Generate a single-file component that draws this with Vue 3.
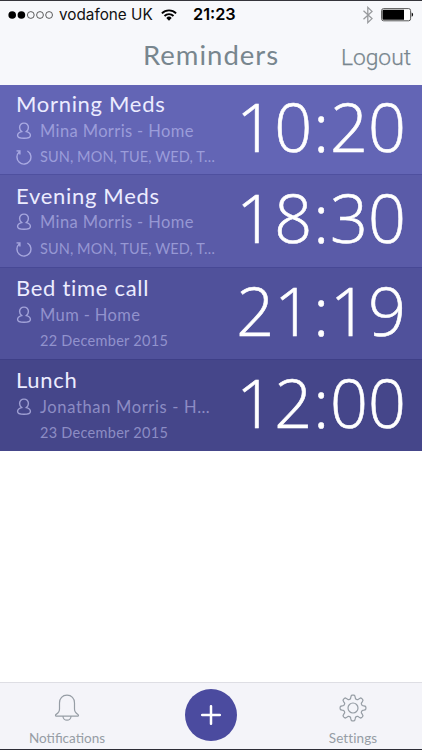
<script setup>
const reminders = [
  { title: 'Morning Meds', contact: 'Mina Morris - Home', when: 'SUN, MON, TUE, WED, T…', repeat: true, time: '10:20', tone: 'a' },
  { title: 'Evening Meds', contact: 'Mina Morris - Home', when: 'SUN, MON, TUE, WED, T…', repeat: true, time: '18:30', tone: 'b' },
  { title: 'Bed time call', contact: 'Mum - Home', when: '22 December 2015', repeat: false, time: '21:19', tone: 'c' },
  { title: 'Lunch', contact: 'Jonathan Morris - H…', when: '23 December 2015', repeat: false, time: '12:00', tone: 'd' },
]

// Outline of an eight-toothed cog, centred on the origin
const cog = (() => {
  const points = []
  const n = 96
  for (let i = 0; i < n; i++) {
    const t = (i / n) * Math.PI * 2
    const c = Math.cos(8 * t)
    const r = 11.1 + 1.8 * Math.tanh(2.2 * c) / Math.tanh(2.2)
    points.push(`${(r * Math.sin(t)).toFixed(2)} ${(-r * Math.cos(t)).toFixed(2)}`)
  }
  return `M${points.join('L')}Z`
})()
</script>

<template>
  <div class="screen">
    <header>
      <div class="status">
        <svg class="signal" width="46" height="10" viewBox="0 0 46 10">
          <circle cx="4.2" cy="5" r="3.8" fill="#000" />
          <circle cx="13.4" cy="5" r="3.8" fill="#000" />
          <g fill="none" stroke="#333" stroke-width=".8">
            <circle cx="22.8" cy="5" r="3.4" />
            <circle cx="32" cy="5" r="3.4" />
            <circle cx="41.1" cy="5" r="3.4" />
          </g>
        </svg>
        <span class="carrier">vodafone UK</span>
        <svg class="wifi" width="16" height="12" viewBox="0 0 16 12">
          <g fill="none" stroke="#000" stroke-width="1.9">
            <path d="M.9 4.3a10 10 0 0 1 14.2 0" />
            <path d="M3.5 7a6.4 6.4 0 0 1 9 0" />
          </g>
          <path d="M5.3 8.9a3.8 3.8 0 0 1 5.4 0L8 11.7Z" fill="#000" />
        </svg>
        <span class="clock">21:23</span>
        <svg class="bluetooth" width="12" height="18" viewBox="0 0 12 18">
          <path d="M1.5 4.8 10 12.6 5.8 16.6V1.4L10 5.4 1.5 13.2" fill="none" stroke="#999b9e" stroke-width="1.3" />
        </svg>
        <svg class="battery" width="33" height="14" viewBox="0 0 33 14">
          <rect x=".6" y=".6" width="29" height="12.2" rx="2" fill="#fff" stroke="#444" stroke-width=".9" />
          <path d="M2.5 1.7H23V11.7H2.5a1 1 0 0 1-1-1V2.7a1 1 0 0 1 1-1Z" fill="#000" />
          <path d="M30.7 4.6a2.3 2.3 0 0 1 0 4.2Z" fill="#000" />
        </svg>
      </div>
      <div class="nav">
        <h1>Reminders</h1>
        <span class="logout">Logout</span>
      </div>
    </header>

    <main>
      <article v-for="item in reminders" :key="item.title" :class="['row', 'tone-' + item.tone]">
        <div class="details">
          <h2>{{ item.title }}</h2>
          <div class="contact">
            <svg class="person" width="16" height="18" viewBox="0 0 16 18">
              <path d="M5.6 9.6C4.4 8.6 3.6 7.2 3.6 5.5A4.3 4.3 0 0 1 8 1.1a4.3 4.3 0 0 1 4.4 4.4c0 1.7-.8 3.1-2 4.1 2.5.6 4 1.9 4 3.9 0 2.2-2.3 2.8-6.4 2.8s-6.4-.6-6.4-2.8c0-2 1.5-3.3 4-3.9Z" />
            </svg>
            <span>{{ item.contact }}</span>
          </div>
          <div :class="['when', { days: item.repeat }]">
            <svg v-if="item.repeat" class="repeat" width="16" height="16" viewBox="0 0 16 16">
              <path d="M11.4 2A7 7 0 1 1 3.2 2.9M.5 1.9 3.9 2V5.6" />
            </svg>
            <span>{{ item.when }}</span>
          </div>
        </div>
        <time>{{ item.time.split(':')[0] }}<span class="colon">:</span>{{ item.time.split(':')[1] }}</time>
      </article>
    </main>

    <footer>
      <div class="tab">
        <svg width="26" height="28" viewBox="0 0 26 28">
          <path d="M13 1.2c-4.6 0-7.5 3.2-7.5 7.7v6.2c0 2.5-1.2 4.1-3.4 5.3-.9.5-.8 1.7.2 1.7h21.4c1 0 1.1-1.2.2-1.7-2.2-1.2-3.4-2.8-3.4-5.3V8.9c0-4.5-2.9-7.7-7.5-7.7ZM9 22.2a4 4 0 0 0 8 0" />
        </svg>
        <span class="notifications">Notifications</span>
      </div>
      <div class="add">
        <svg width="20" height="20" viewBox="0 0 20 20">
          <path d="M10 1.2V18.8M1.2 10H18.8" />
        </svg>
      </div>
      <div class="tab">
        <svg width="28" height="28" viewBox="-14 -14 28 28">
          <path :d="cog" />
          <circle r="5" />
        </svg>
        <span class="settings">Settings</span>
      </div>
    </footer>
  </div>
</template>

<style>
body {
  background: #fff;
}
</style>

<style scoped>
.screen {
  box-sizing: border-box;
  width: 422px;
  height: 750px;
  display: flex;
  flex-direction: column;
  overflow: hidden;
  border-top: 1px solid #35353b;
  border-bottom: 1px solid #2c2c36;
  background: #fff;
  font-family: Lato, "Open Sans", sans-serif;
}
h1, h2 {
  margin: 0;
  font-weight: 400;
}
svg {
  display: block;
  flex: none;
}
span, h1, h2, time {
  white-space: nowrap;
}
header {
  height: 84px;
  flex: none;
  background: #f7f8fb;
}
.status {
  display: flex;
  align-items: center;
  height: 27px;
  padding: 0 8px;
  font-family: Inter, sans-serif;
  font-size: 15.5px;
  line-height: 27px;
  color: #111;
}
.carrier {
  width: 95px;
  margin-left: 5px;
  font-size: 15.3px;
}
.wifi {
  margin-left: 7px;
}
.clock {
  width: 44px;
  margin-left: 16px;
  font-size: 16.3px;
  font-weight: 600;
  color: #000;
}
.bluetooth {
  margin-left: auto;
}
.battery {
  margin-left: 7px;
}
.nav {
  display: grid;
  grid-template-columns: 1fr 136px 1fr;
  align-items: baseline;
  padding: 9px 11px 0;
  color: #78868e;
}
h1 {
  grid-column: 2;
  font-size: 27.5px;
  line-height: 36px;
  letter-spacing: 1px;
}
.logout {
  justify-self: end;
  font-family: Roboto, sans-serif;
  font-size: 22.8px;
  font-weight: 300;
  -webkit-text-stroke: .25px #78868e;
}
.row {
  box-sizing: border-box;
  display: flex;
  justify-content: space-between;
  height: 92.3px;
  padding: 6.4px 16px 0;
  border-top: 1px solid rgba(35, 35, 120, .18);
  color: #fff;
}
.tone-a {
  height: 89.4px;
  padding-top: 5px;
  border-top: 0;
  background: #6365b5;
}
.tone-b { background: #5a5ba8; }
.tone-c { background: #50519b; }
.tone-d { background: #45468a; }
.details {
  width: 208px;
}
h2 {
  height: 28px;
  font-size: 22px;
  line-height: 27px;
  letter-spacing: .7px;
  color: #ececff;
}
.contact, .when {
  display: flex;
  align-items: center;
  gap: 8px;
  height: 26px;
  font-size: 16.5px;
  line-height: 26px;
  letter-spacing: .38px;
  color: rgba(213, 213, 255, .5);
}
.contact {
  height: 25px;
}
.tone-d .contact {
  letter-spacing: .65px;
}
.when {
  height: 28px;
  font-size: 14.5px;
  letter-spacing: .28px;
}
.when:not(.days) {
  padding-left: 24px;
}
.days {
  letter-spacing: .1px;
}
.person, .repeat {
  fill: none;
  stroke: rgba(213, 213, 255, .62);
  stroke-width: 1.4;
}
time {
  margin: -3.5px 0 0;
  font-family: "Open Sans", sans-serif;
  font-size: 66.5px;
  font-weight: 300;
  line-height: 78px;
  -webkit-text-stroke: .6px #fff;
}
.colon {
  padding: 0 1px;
}
footer {
  box-sizing: border-box;
  display: grid;
  grid-template-columns: 134px 1fr 138px;
  justify-items: center;
  height: 67px;
  margin-top: auto;
  border-top: 1px solid #dedee4;
  background: #f4f4f9;
}
.tab {
  display: flex;
  flex-direction: column;
  align-items: center;
  padding-top: 11px;
  font-size: 13.5px;
  line-height: 18px;
  color: #969da5;
}
.tab svg {
  fill: none;
  stroke: #969da5;
  stroke-width: 1.2;
}
.tab span {
  margin-top: 7px;
}
.settings {
  letter-spacing: .1px;
}
.add {
  display: grid;
  place-items: center;
  width: 52px;
  height: 52px;
  margin: 6px 0 0 4px;
  border-radius: 50%;
  background: #4b4b9f;
}
.add path {
  stroke: #fff;
  stroke-width: 2.5;
  stroke-linecap: round;
}
</style>
